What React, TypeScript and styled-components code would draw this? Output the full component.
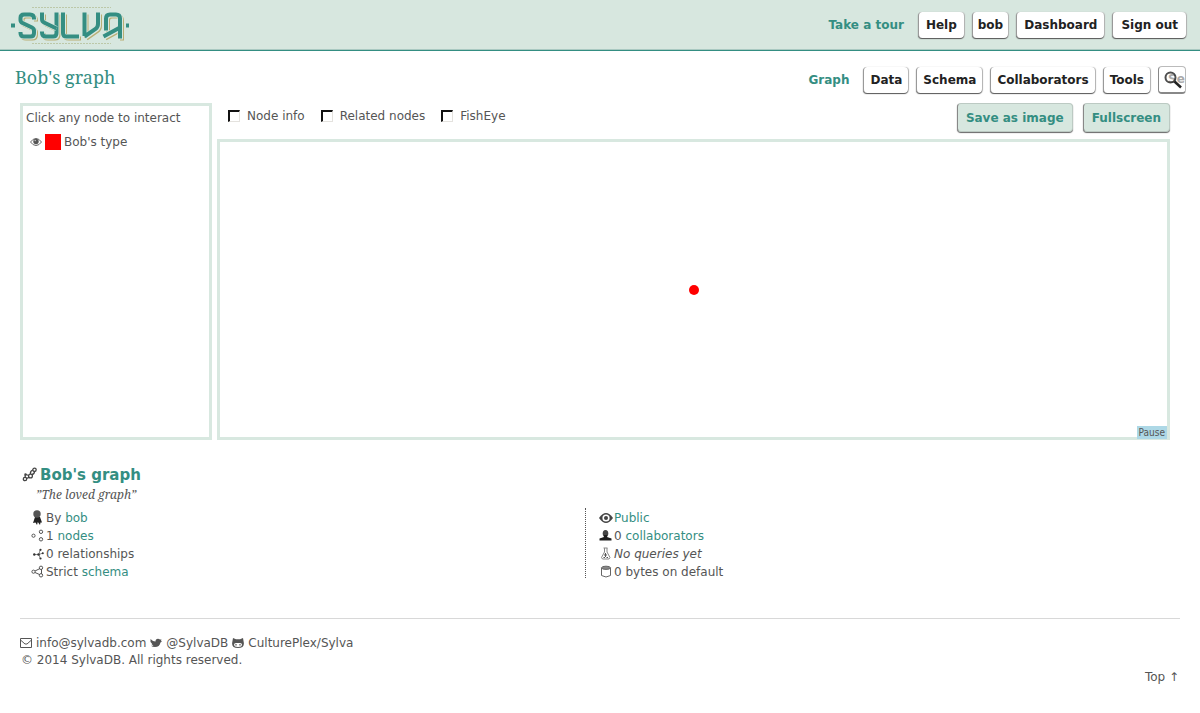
import React from "react";
import styled, { createGlobalStyle } from "styled-components";

const teal = "#348e82";
const mint = "#d8e8e0";
const ink = "#555555";

const GlobalStyle = createGlobalStyle`
  * { box-sizing: border-box; }
  body {
    margin: 0;
    background: #fff;
    color: ${ink};
    font: 12px/18px "DejaVu Sans", sans-serif;
  }
  a { color: ${teal}; text-decoration: none; }
`;

const TopBar = styled.header`
  display: flex;
  align-items: center;
  justify-content: space-between;
  height: 51px;
  padding: 0 14px 0 10px;
  background: #d7e7df;
  border-bottom: 1px solid ${teal};
  box-shadow: inset 0 -1px #a9c9c1;
`;

const LogoLink = styled.a`
  display: block;
  height: 46px;
`;

const Nav = styled.nav`
  display: flex;
  align-items: center;
  gap: 8px;
`;

const NavCurrent = styled.a`
  font-weight: bold;
  margin-right: 6px;
`;

const NavButton = styled.button<{ $pad?: number }>`
  height: 26px;
  padding: 0 ${(p) => p.$pad ?? 6}px;
  border: 0;
  border-left: 1px solid #999;
  border-radius: 4px;
  background: #fff;
  color: #222;
  font: bold 12px/18px "DejaVu Sans", sans-serif;
  box-shadow: 0 1px 1px #555, 1px 0 1px #bbb;
`;

const TitleBar = styled.div`
  display: flex;
  align-items: center;
  justify-content: space-between;
  height: 52px;
  padding: 6px 14px 0 15px;
`;

const PageTitle = styled.h1`
  margin: 0 0 6px;
  color: ${teal};
  font: normal 18px/24px "Noto Serif", "Droid Serif", "Liberation Serif", serif;
`;

const SearchBox = styled.label`
  position: relative;
  display: block;
  width: 28px;
  height: 28px;
  svg { position: absolute; left: 6px; top: 5px; pointer-events: none; }
`;

const SearchInput = styled.input`
  display: block;
  width: 28px;
  height: 28px;
  padding: 0 0 2px 9px;
  border: 1px solid #bbb;
  border-left-color: #888;
  border-bottom: 2px solid #888;
  border-radius: 4px;
  background: #fff;
  font: bold 12px/18px "DejaVu Sans", sans-serif;
  &::placeholder { color: #aaa; opacity: 1; }
`;

const Workspace = styled.main`
  display: flex;
  gap: 5px;
  padding: 0 30px 0 20px;
`;

const TypesPanel = styled.aside`
  flex: 0 0 192px;
  padding: 3px;
  border: 3px solid ${mint};
`;

const TypeRow = styled.div`
  display: flex;
  align-items: center;
  gap: 3px;
  margin-top: 6px;
  padding-left: 4px;
`;

const Swatch = styled.span`
  width: 16px;
  height: 16px;
  background: #f00;
`;

const GraphColumn = styled.section`
  flex: 1;
  min-width: 0;
`;

const Toolbar = styled.div`
  display: flex;
  justify-content: space-between;
  height: 36px;
  padding-left: 11px;
`;

const Options = styled.div`
  display: flex;
  align-items: center;
  gap: 16px;
  height: 25px;
`;

const Option = styled.label`
  display: flex;
  align-items: center;
  gap: 7px;
`;

const Checkbox = styled.input`
  appearance: none;
  width: 12px;
  height: 12px;
  margin: 0;
  border: 1px solid #e4e2de;
  border-top: 2px solid #111;
  border-left: 2px solid #111;
  background: #fff;
`;

const Actions = styled.div`
  display: flex;
  gap: 10px;
`;

const ActionButton = styled.button`
  height: 29px;
  padding: 0 8px;
  border: 1px solid #bccac3;
  border-left-color: #888;
  border-radius: 4px;
  background: #d7e7df;
  color: ${teal};
  font: bold 12px/18px "DejaVu Sans", sans-serif;
  box-shadow: 0 1px 1px #666;
`;

const Canvas = styled.div`
  position: relative;
  height: 301px;
  border: 3px solid ${mint};
`;

const Node = styled.span`
  position: absolute;
  left: 50%;
  top: 50%;
  width: 10px;
  height: 10px;
  margin: -5px;
  border-radius: 50%;
  background: #f00;
`;

const Pause = styled.button`
  position: absolute;
  right: 0;
  bottom: -2px;
  padding: 0 2px;
  border: 0;
  background: #add8e6;
  color: ${ink};
  font: 10px/13px "DejaVu Sans Condensed", "DejaVu Sans", sans-serif;
`;

const Summary = styled.section`
  padding: 25px 20px 0;
`;

const SummaryTitle = styled.h2`
  display: flex;
  align-items: center;
  gap: 2px;
  margin: 0;
  padding-left: 2px;
  color: ${teal};
  font: bold 15px/20px "DejaVu Sans", sans-serif;
`;

const Quote = styled.p`
  margin: 0 0 4px 16px;
  font: italic 12px/19px "Noto Serif", "Droid Serif", "Liberation Serif", serif;
`;

const Stats = styled.div`
  display: grid;
  grid-template-columns: calc(50% - 15px) 1fr;
`;

const StatList = styled.ul<{ $divided?: boolean }>`
  margin: 0;
  padding: 1px 0 0 ${(p) => (p.$divided ? 13 : 11)}px;
  border-left: ${(p) => (p.$divided ? "1px dotted #555" : "0")};
  list-style: none;
  height: 70px;
`;

const Stat = styled.li`
  display: flex;
  align-items: center;
  height: 18px;
  svg { flex: none; margin-right: 1px; }
  span { white-space: pre; }
`;

const Footer = styled.footer`
  margin: 40px 20px 0;
  padding-top: 16px;
  border-top: 1px solid #d8d8d8;
  line-height: 17px;
  a { color: ${ink}; }
`;

const Contacts = styled.div`
  display: flex;
  align-items: center;
  gap: 4px;
`;

const Contact = styled.a`
  display: flex;
  align-items: center;
  gap: 4px;
  svg { margin-bottom: 2px; }
`;

const Copyright = styled.p`
  margin: 0;
  padding-left: 1px;
`;

const TopLink = styled.div`
  padding-right: 1px;
  text-align: right;
`;

const LETTERS = [
  "M34 19.500 V18.500 Q34 14.500 30 14.500 H24 Q20.500 14.500 20.500 18 V20 Q20.500 22 22.500 23 L32 27.500 Q34 28.500 34 30.500 V33 Q34 36.500 30.500 36.500 H24 Q20.500 36.500 20.500 33 V32",
  "M56.500 12.500 V33 Q56.500 36.500 53 36.500 H46 Q42 36.500 42 32.500 V31.500",
  "M42 12.500 V19 Q42 21.500 44 22.500 L56.500 28.500",
  "M63 12.500 V33 Q63 36.500 66.500 36.500 H79",
  "M84.500 12.500 V36 M98 12.500 V24 Q98 27 95.500 29 L84.500 36.500",
  "M106 30.500 V18.500 Q106 14.500 110 14.500 H116 Q120 14.500 120 18.500 V38.500 M103.500 36.500 L120 27.500",
];

function Logo() {
  return (
    <svg width="122" height="46" viewBox="10 2 122 46" fill="none" role="img" aria-label="Sylva">
      <path d="M32 7.500 H111 M32 43.500 H111" stroke="#bcc8a8" strokeDasharray="2 1" />
      <path d="M11 25.500 h4 M126 25.500 h3" stroke={teal} strokeWidth="4" />
      <g transform="translate(2 2)" stroke="#b9ae74" strokeWidth="4">
        {LETTERS.map((d) => <path key={d} d={d} />)}
      </g>
      <g transform="translate(1 1)" stroke="#d7e7df" strokeWidth="4">
        {LETTERS.map((d) => <path key={d} d={d} />)}
      </g>
      {LETTERS.map((d) => (
        <g key={d}>
          <path d={d} stroke="#d7e7df" strokeWidth="5" />
          <path d={d} stroke={teal} strokeWidth="4" />
        </g>
      ))}
    </svg>
  );
}

function SearchIcon() {
  return (
    <svg width="20" height="20" viewBox="0 0 20 20" fill="none">
      <circle cx="6.500" cy="6.500" r="5" stroke="#222" strokeOpacity=".8" strokeWidth="2" />
      <path d="M10.500 10.500 L17 16.500" stroke="#222" strokeWidth="2.500" />
    </svg>
  );
}

function EyeIcon() {
  return (
    <svg width="14" height="12" viewBox="0 0 14 12">
      <path d="M0 6 Q3.500 1 7 1 T14 6 Q10.500 11 7 11 T0 6" fill="#444" />
      <circle cx="7" cy="6" r="3.600" fill="#fff" />
      <circle cx="7" cy="6" r="2" fill="#444" />
    </svg>
  );
}

function TypeEyeIcon() {
  return (
    <svg width="12" height="10" viewBox="0 0 12 10" fill="none">
      <path d="M.5 5 Q3 1.500 6 1.500 T11.500 5 Q9 8.500 6 8.500 T.5 5Z" stroke="#666" />
      <circle cx="6" cy="4.500" r="2.700" fill="#555" />
      <circle cx="5.200" cy="3.500" r=".7" fill="#ccc" />
    </svg>
  );
}

function GraphIcon() {
  return (
    <svg width="16" height="16" viewBox="0 0 16 16" fill="none" stroke="#444" strokeWidth="1.300">
      <circle cx="3" cy="12" r="1.700" />
      <circle cx="8.500" cy="9" r="1.900" />
      <circle cx="12.500" cy="2.800" r="1.700" />
      <circle cx="3.500" cy="7.500" r=".6" />
      <path d="M3.200 8 V10.300 M4 7.500 L6.700 8.500 M4.500 11.500 L7 10.300 M10 7.500 Q12.500 7 12.500 4.500 M10.800 3 Q8 4 8.500 7" />
    </svg>
  );
}

function RibbonIcon() {
  return (
    <svg width="14" height="16" viewBox="0 0 14 16">
      <path d="M4 7 L2 13 L4.500 12.500 L6 15 L6.800 12 L9 15 L9.500 12.500 L11 12.500 L9 7Z" fill="#222" />
      <circle cx="6" cy="4" r="3.700" fill="#555" />
    </svg>
  );
}

function NodesIcon({ linked = false }: { linked?: boolean }) {
  return (
    <svg width="14" height="14" viewBox="0 0 14 14" fill="none" stroke="#555">
      {linked && <path d="M4 6 L9 3.500 M4 7.500 L8.500 9.500 M10.500 4 V9" />}
      <circle cx="2.500" cy="6.700" r="1.600" />
      <circle cx="10" cy="2.800" r="1.700" />
      <circle cx="10" cy="10.300" r="1.700" />
    </svg>
  );
}

function RelationIcon() {
  return (
    <svg width="14" height="14" viewBox="0 0 14 14" fill="#333">
      <path d="M3 7.500 H8 L9 3 M8 7.500 L9 11 M8 7.500 L12 6" stroke="#888" fill="none" />
      <circle cx="3.300" cy="7.500" r="1.200" />
      <circle cx="7.500" cy="7.500" r="1.200" />
      <circle cx="9.500" cy="2.800" r="1.100" />
      <circle cx="9.500" cy="11.500" r="1.100" />
      <circle cx="11.800" cy="6.300" r="1" />
    </svg>
  );
}

function PersonIcon() {
  return (
    <svg width="14" height="14" viewBox="0 0 14 14">
      <ellipse cx="6.500" cy="4.500" rx="2.800" ry="3.500" fill="#444" />
      <path d="M5 6 H8 V8 L12.500 9.500 V11.500 H.5 V9.500 L5 8Z" fill="#1c1c1c" />
    </svg>
  );
}

function FlaskIcon() {
  return (
    <svg width="14" height="14" viewBox="0 0 14 14" fill="none" stroke="#888">
      <path d="M4.500 1 H8.500 M5.500 1 V5 L2.500 10.500 L3.500 12 H10 L11 10.500 L8 5 V1" />
      <path d="M6.500 6 V10 M5 8 H8 M4.500 10.500 H6 M7.500 10.500 H9" stroke="#555" />
    </svg>
  );
}

function DatabaseIcon() {
  return (
    <svg width="14" height="14" viewBox="0 0 14 14" fill="none" stroke="#666">
      <path d="M2.500 3 V10.500 Q7 13.500 11.500 10.500 V3" />
      <ellipse cx="7" cy="2.800" rx="4.500" ry="1.600" fill="#888" />
    </svg>
  );
}

function MailIcon() {
  return (
    <svg width="12" height="12" viewBox="0 0 12 12" fill="none" stroke="#555">
      <path d="M.5 1.500 H11.500 V10.500 H.5Z M.5 3 L5 7 H7 L11.500 3" />
    </svg>
  );
}

function BirdIcon() {
  return (
    <svg width="12" height="12" viewBox="0 0 12 12">
      <path d="M.5 2 Q3 4.500 5.500 4.500 Q5.500 1.800 8 1.800 Q9 1.800 10 2.600 L11.500 2.500 L11 4 L12 4.500 L10.500 5.500 Q9.500 10 5 10 Q2.500 10 1 8.800 H3.500 L1.500 7 L2 6.500 L.5 5 Z" fill="#555" />
    </svg>
  );
}

function CatIcon() {
  return (
    <svg width="12" height="12" viewBox="0 0 12 12">
      <path d="M1 1 L4 2.300 H8 L11 1 L11.700 5 Q13 11 6 11 T.3 5Z" fill="#555" />
      <path d="M2 7.500 Q2 6 4 6 H8 Q10 6 10 7.500 Q10 10 6 10 T2 7.500" fill="#fff" />
      <path d="M4 7 V8.500 M8 7 V8.500" stroke="#555" strokeWidth="1.200" />
    </svg>
  );
}

export default function App() {
  return (
    <>
      <GlobalStyle />
      <TopBar>
        <LogoLink href="#"><Logo /></LogoLink>
        <Nav>
          <NavCurrent href="#">Take a tour</NavCurrent>
          <NavButton $pad={7}>Help</NavButton>
          <NavButton $pad={5}>bob</NavButton>
          <NavButton $pad={7}>Dashboard</NavButton>
          <NavButton $pad={8}>Sign out</NavButton>
        </Nav>
      </TopBar>
      <TitleBar>
        <PageTitle>Bob's graph</PageTitle>
        <Nav>
          <NavCurrent href="#">Graph</NavCurrent>
          <NavButton>Data</NavButton>
          <NavButton>Schema</NavButton>
          <NavButton>Collaborators</NavButton>
          <NavButton>Tools</NavButton>
          <SearchBox>
            <SearchInput type="text" placeholder="Search" aria-label="Search" />
            <SearchIcon />
          </SearchBox>
        </Nav>
      </TitleBar>
      <Workspace>
        <TypesPanel>
          Click any node to interact
          <TypeRow>
            <TypeEyeIcon />
            <Swatch />
            Bob's type
          </TypeRow>
        </TypesPanel>
        <GraphColumn>
          <Toolbar>
            <Options>
              <Option><Checkbox type="checkbox" />Node info</Option>
              <Option><Checkbox type="checkbox" />Related nodes</Option>
              <Option><Checkbox type="checkbox" />FishEye</Option>
            </Options>
            <Actions>
              <ActionButton>Save as image</ActionButton>
              <ActionButton>Fullscreen</ActionButton>
            </Actions>
          </Toolbar>
          <Canvas>
            <Node />
            <Pause>Pause</Pause>
          </Canvas>
        </GraphColumn>
      </Workspace>
      <Summary>
        <SummaryTitle><GraphIcon />Bob's graph</SummaryTitle>
        <Quote>”The loved graph”</Quote>
        <Stats>
          <StatList>
            <Stat><RibbonIcon /><span>By <a href="#">bob</a></span></Stat>
            <Stat><NodesIcon /><span>1 <a href="#">nodes</a></span></Stat>
            <Stat><RelationIcon /><span>0 relationships</span></Stat>
            <Stat><NodesIcon linked /><span>Strict <a href="#">schema</a></span></Stat>
          </StatList>
          <StatList $divided>
            <Stat><EyeIcon /><a href="#">Public</a></Stat>
            <Stat><PersonIcon /><span>0 <a href="#">collaborators</a></span></Stat>
            <Stat><FlaskIcon /><em>No queries yet</em></Stat>
            <Stat><DatabaseIcon /><span>0 bytes on default</span></Stat>
          </StatList>
        </Stats>
      </Summary>
      <Footer>
        <Contacts>
          <Contact href="#"><MailIcon />info@sylvadb.com</Contact>
          <Contact href="#"><BirdIcon />@SylvaDB</Contact>
          <Contact href="#"><CatIcon />CulturePlex/Sylva</Contact>
        </Contacts>
        <Copyright>© 2014 SylvaDB. All rights reserved.</Copyright>
        <TopLink><a href="#">Top ↑</a></TopLink>
      </Footer>
    </>
  );
}
